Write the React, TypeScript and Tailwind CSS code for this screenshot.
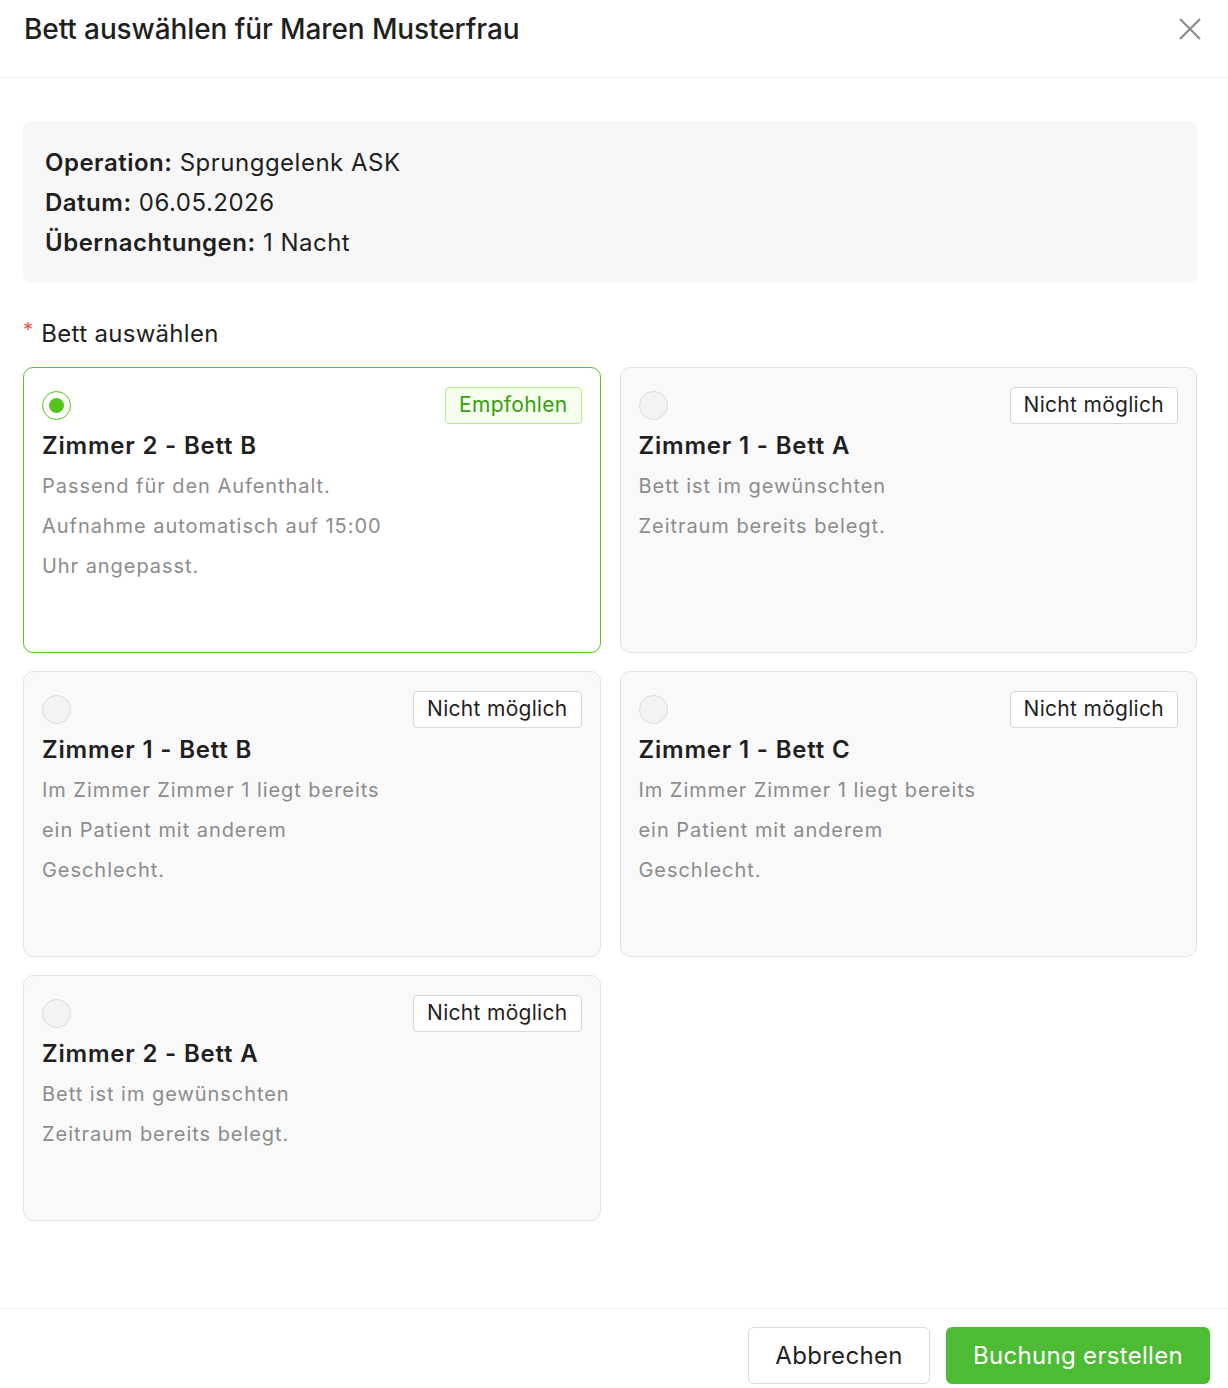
import React from "react";

type Bed = {
  id: string;
  title: string;
  lines: string[];
  available: boolean;
};

const beds: Bed[] = [
  {
    id: "z2b",
    title: "Zimmer 2 - Bett B",
    lines: ["Passend für den Aufenthalt.", "Aufnahme automatisch auf 15:00", "Uhr angepasst."],
    available: true,
  },
  {
    id: "z1a",
    title: "Zimmer 1 - Bett A",
    lines: ["Bett ist im gewünschten", "Zeitraum bereits belegt."],
    available: false,
  },
  {
    id: "z1b",
    title: "Zimmer 1 - Bett B",
    lines: ["Im Zimmer Zimmer 1 liegt bereits", "ein Patient mit anderem", "Geschlecht."],
    available: false,
  },
  {
    id: "z1c",
    title: "Zimmer 1 - Bett C",
    lines: ["Im Zimmer Zimmer 1 liegt bereits", "ein Patient mit anderem", "Geschlecht."],
    available: false,
  },
  {
    id: "z2a",
    title: "Zimmer 2 - Bett A",
    lines: ["Bett ist im gewünschten", "Zeitraum bereits belegt."],
    available: false,
  },
];

const CloseIcon = () => (
  <svg width="24" height="24" viewBox="0 0 24 24" fill="none">
    <path d="M2 2 L22 22 M22 2 L2 22" stroke="#8c8c8c" strokeWidth="2.2" />
  </svg>
);

const BedCard = ({ bed, selected }: { bed: Bed; selected: boolean }) => {
  return (
    <div
      className={
        selected
          ? "rounded-[10px] border border-[#52c41a] bg-white px-[18px] pt-[18px] pb-[66px]"
          : "rounded-[10px] border border-[#e3e3e3] bg-[#f9f9f9] px-[18px] pt-[18px] pb-[66px]"
      }
    >
      <div className="flex items-center justify-between h-[38px]">
        {selected ? (
          <span className="flex items-center justify-center w-[29px] h-[29px] rounded-full border-[1.5px] border-[#52c41a] bg-white">
            <span className="w-[15px] h-[15px] rounded-full bg-[#52c41a]" />
          </span>
        ) : (
          <span className="w-[29px] h-[29px] rounded-full border border-[#dcdcdc] bg-[#f3f3f3]" />
        )}
        {bed.available ? (
          <span className="h-[37px] px-[13px] flex items-center rounded-[4px] border border-[#b7eb8f] bg-[#f6ffed] text-[#389e0d] text-[21px] tracking-[0.3px]">
            Empfohlen
          </span>
        ) : (
          <span className="h-[37px] px-[13px] flex items-center rounded-[4px] border border-[#d9d9d9] bg-white text-[#1f1f1f] text-[21px] tracking-[0.3px]">
            Nicht möglich
          </span>
        )}
      </div>
      <h3 className="mt-[2px] text-[24px] leading-[40px] font-semibold text-[#1f1f1f] tracking-[0.8px]">
        {bed.title}
      </h3>
      <div className="max-w-[360px] text-[20px] leading-[40px] text-[#8c8c8c] tracking-[0.95px]">
        {bed.lines.map((l, i) => (
          <p key={i}>{l}</p>
        ))}
      </div>
    </div>
  );
};

export default function App() {
  return (
    <div className="w-[1228px] h-[1388px] bg-white flex flex-col overflow-hidden font-['Inter','Liberation_Sans',sans-serif] text-[#1f1f1f]">
      <div className="h-[78px] shrink-0 border-b border-[#efefef] flex items-start justify-between pl-6 pr-[26px] pt-[11px]">
        <h2 className="text-[28px] leading-[36px] font-medium tracking-[-0.1px]">Bett auswählen für Maren Musterfrau</h2>
        <button className="mt-[6px]">
          <CloseIcon />
        </button>
      </div>

      <div className="flex-1 pl-[23px] pr-[31px] pt-[43px]">
        <div className="rounded-[8px] bg-[#f7f7f7] px-[22px] pt-[22px] pb-[20px] text-[24px] leading-[40px] tracking-[0.5px]">
          <p>
            <span className="font-semibold">Operation:</span> Sprunggelenk ASK
          </p>
          <p>
            <span className="font-semibold">Datum:</span> 06.05.2026
          </p>
          <p>
            <span className="font-semibold">Übernachtungen:</span> 1 Nacht
          </p>
        </div>

        <div className="mt-[33px] flex items-center gap-[8px] text-[24px] leading-[36px] tracking-[0.3px]">
          <span className="text-[#ff4d4f] text-[20px] self-start leading-[28px]">*</span>
          <span>Bett auswählen</span>
        </div>

        <div className="mt-[15px] grid grid-cols-2 gap-x-[19px] gap-y-[18px]">
          {beds.map((b, i) => (
            <BedCard key={b.id} bed={b} selected={i === 0} />
          ))}
        </div>
      </div>

      <div className="h-[80px] shrink-0 border-t border-[#efefef] flex justify-end items-start gap-4 pt-[18px] pr-[18px]">
        <button className="h-[57px] w-[182px] rounded-[6px] border border-[#d9d9d9] bg-white text-[24px] text-[#1f1f1f] tracking-[0.3px]">
          Abbrechen
        </button>
        <button className="h-[57px] w-[264px] rounded-[6px] bg-[#4dbb33] text-[24px] text-white tracking-[0.3px]">
          Buchung erstellen
        </button>
      </div>
    </div>
  );
}
